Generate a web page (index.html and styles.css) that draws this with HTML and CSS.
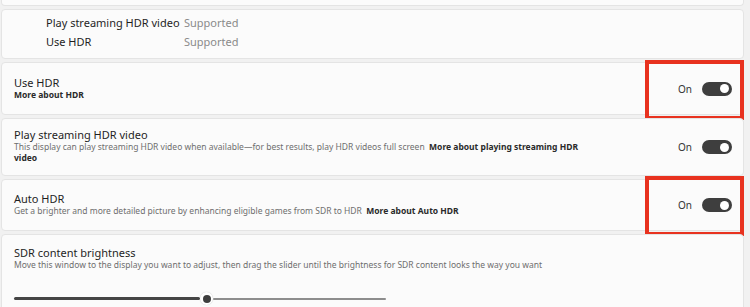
FILE: index.html
```html
<!DOCTYPE html>
<html lang="en">
<head>
<meta charset="utf-8">
<link rel="stylesheet" href="styles.css">
</head>
<body>
<div class="page">
  <div class="card card-top"></div>
  <div class="card card-info">
    <div class="info-row"><span class="info-label">Play streaming HDR video</span><span class="info-value">Supported</span></div>
    <div class="info-row"><span class="info-label">Use HDR</span><span class="info-value">Supported</span></div>
  </div>
  <div class="card setting s-usehdr">
    <div class="text">
      <div class="title">Use HDR</div>
      <div class="desc"><b class="link">More about HDR</b></div>
    </div>
    <div class="control"><span class="state">On</span><span class="toggle"><span class="knob"></span></span></div>
    <div class="highlight hl-1"></div>
  </div>
  <div class="card setting s-stream">
    <div class="text">
      <div class="title">Play streaming HDR video</div>
      <div class="desc desc-wrap">This display can play streaming HDR video when available—for best results, play HDR videos full screen&nbsp; <b class="link">More about playing streaming HDR video</b></div>
    </div>
    <div class="control"><span class="state">On</span><span class="toggle"><span class="knob"></span></span></div>
  </div>
  <div class="card setting s-auto">
    <div class="text">
      <div class="title">Auto HDR</div>
      <div class="desc">Get a brighter and more detailed picture by enhancing eligible games from SDR to HDR&nbsp; <b class="link">More about Auto HDR</b></div>
    </div>
    <div class="control"><span class="state">On</span><span class="toggle"><span class="knob"></span></span></div>
    <div class="highlight hl-2"></div>
  </div>
  <div class="card s-sdr">
    <div class="title">SDR content brightness</div>
    <div class="desc">Move this window to the display you want to adjust, then drag the slider until the brightness for SDR content looks the way you want</div>
    <div class="slider">
      <span class="track-fill"></span>
      <span class="thumb"><span class="thumb-dot"></span></span>
      <span class="track-rest"></span>
    </div>
  </div>
</div>
</body>
</html>
```
FILE: styles.css
```css
* { box-sizing: border-box; }
html, body { margin: 0; padding: 0; }
body {
  background: #f1f1f1;
  font-family: "Noto Sans", "Open Sans", sans-serif;
  color: #1f1f1f;
  width: 750px;
  height: 307px;
  overflow: hidden;
}
.page {
  display: flex;
  flex-direction: column;
  gap: 3px;
  padding: 0 6px 0 1px;
}
.card {
  background: #fbfbfb;
  border: 1px solid #e4e4e4;
  border-radius: 4px;
  position: relative;
}
.card-top {
  height: 6px;
  border-top: none;
  border-radius: 0 0 4px 4px;
}
.card-info {
  height: 50px;
  padding: 5px 0 0 44px;
  display: flex;
  flex-direction: column;
  gap: 3px;
}
.info-row {
  display: flex;
  font-size: 11px;
  line-height: 16px;
}
.info-label { width: 138px; color: #1f1f1f; }
.info-value { color: #8a8a8a; }

.setting {
  display: flex;
  align-items: center;
  padding: 0 11px 0 12px;
}
.s-usehdr { height: 53px; }
.s-stream { height: 58px; }
.s-stream .text { margin-top: -3px; }
.s-auto { height: 52px; }
.s-auto .text { margin-top: -1px; }
.text { flex: 1; }
.title {
  font-size: 11px;
  line-height: 13px;
  color: #1f1f1f;
}
.desc {
  font-size: 8.5px;
  line-height: 11.5px;
  color: #6e6e6e;
}
.desc-wrap { width: 575px; }
.link { color: #2a2a2a; font-weight: 700; }
.control {
  display: flex;
  align-items: center;
  gap: 10px;
}
.state { font-size: 10px; color: #333; }
.toggle {
  width: 30px;
  height: 14px;
  border-radius: 7px;
  background: #3e3e3e;
  display: flex;
  align-items: center;
  justify-content: flex-end;
  padding-right: 3px;
}
.knob {
  width: 9px;
  height: 9px;
  border-radius: 50%;
  background: #fff;
}
.highlight {
  position: absolute;
  border: 4px solid #e8321f;
  pointer-events: none;
}
.hl-1 { top: -3px; right: -1px; width: 99px; height: 60px; }
.hl-2 { top: -4px; right: -1px; width: 99px; height: 60px; }

.s-sdr {
  height: 80px;
  padding: 11px 12px 0 12px;
}
.slider {
  display: flex;
  align-items: center;
  width: 372px;
  margin-top: 21px;
  height: 14px;
}
.track-fill {
  width: 186px;
  height: 3px;
  background: #454545;
  border-radius: 2px;
}
.thumb {
  width: 13px;
  height: 13px;
  border-radius: 50%;
  background: #fff;
  box-shadow: 0 0 1px rgba(0,0,0,.25);
  display: flex;
  align-items: center;
  justify-content: center;
}
.thumb-dot {
  width: 8px;
  height: 8px;
  border-radius: 50%;
  background: #3e3e3e;
}
.track-rest {
  flex: 1;
  height: 2px;
  background: #8d8d8d;
  border-radius: 1px;
}
```
